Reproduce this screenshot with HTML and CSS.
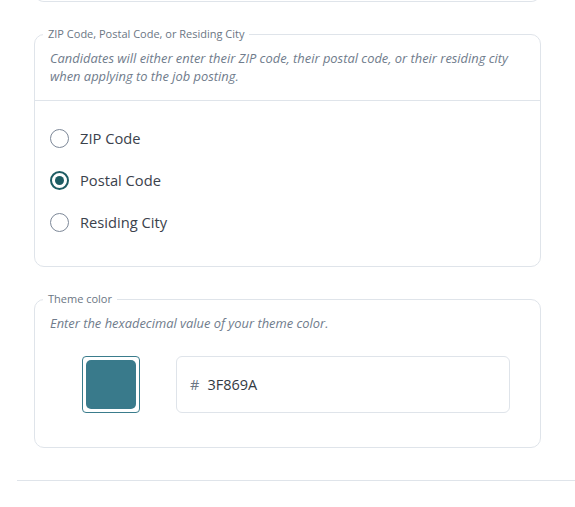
FILE: index.html
```html
<!DOCTYPE html>
<html lang="en">
<head>
  <meta charset="UTF-8" />
  <title>Job posting settings</title>
  <link rel="stylesheet" href="styles.css">
</head>
<body>

  <div class="formulario">
    <div class="bloque-anterior"></div>

    <fieldset class="grupo">
      <legend>ZIP Code, Postal Code, or Residing City</legend>
      <p class="ayuda ayuda-linea">Candidates will either enter their ZIP code, their postal code, or their residing city when applying to the job posting.</p>

      <div class="opciones">
        <label class="opcion">
          <input type="radio" name="ubicacion" value="zip">
          <span>ZIP Code</span>
        </label>
        <label class="opcion">
          <input type="radio" name="ubicacion" value="postal" checked>
          <span>Postal Code</span>
        </label>
        <label class="opcion">
          <input type="radio" name="ubicacion" value="city">
          <span>Residing City</span>
        </label>
      </div>
    </fieldset>

    <fieldset class="grupo grupo-color">
      <legend>Theme color</legend>
      <p class="ayuda">Enter the hexadecimal value of your theme color.</p>

      <div class="fila-color">
        <div class="muestra">
          <div class="muestra-relleno"></div>
        </div>
        <div class="campo-hex">
          <span class="almohadilla">#</span>
          <span class="valor">3F869A</span>
        </div>
      </div>
    </fieldset>
  </div>

  <div class="separador"></div>

</body>
</html>
```

FILE: styles.css
```css
body {
  margin: 0;
  font-family: 'Open Sans', sans-serif;
  background-color: #fff;
  color: #3b424c;
}

.formulario {
  padding: 0 34px;
}

.bloque-anterior {
  height: 10px;
  margin-top: -9px;
  border: 1px solid #dfe4ea;
  border-top: none;
  border-radius: 0 0 10px 10px;
}

.grupo {
  margin: 25px 0 0;
  padding: 0;
  border: 1px solid #dfe4ea;
  border-radius: 10px;
  min-width: 0;
}

.grupo legend {
  margin-left: 8px;
  padding: 0 5px;
  font-size: 11px;
  line-height: 14px;
  color: #6b7684;
}

.ayuda {
  margin: 0;
  padding: 8px 15px 0;
  font-size: 12.9px;
  line-height: 18px;
  font-style: italic;
  color: #707c8c;
}

.ayuda-linea {
  padding-bottom: 15px;
  border-bottom: 1px solid #dfe4ea;
}

.opciones {
  display: flex;
  flex-direction: column;
  gap: 21px;
  padding: 27px 15px 33px;
}

.opcion {
  display: flex;
  align-items: center;
  gap: 11px;
  font-size: 14.7px;
  line-height: 21px;
  color: #3b424c;
  cursor: pointer;
}

.opcion input {
  appearance: none;
  margin: 0;
  width: 19px;
  height: 19px;
  border: 1.5px solid #7d8898;
  border-radius: 50%;
  display: grid;
  place-items: center;
}

.opcion input:checked {
  border: 2px solid #1d5c63;
}

.opcion input:checked::after {
  content: "";
  width: 9px;
  height: 9px;
  border-radius: 50%;
  background-color: #1d5c63;
}

.fila-color {
  display: flex;
  align-items: center;
  gap: 36px;
  padding: 24px 30px 34px 47px;
}

.muestra {
  width: 58px;
  height: 57px;
  box-sizing: border-box;
  border: 1px solid #3a7c8c;
  border-radius: 4px;
  padding: 3px;
}

.muestra-relleno {
  height: 100%;
  border-radius: 5px;
  background-color: #397a8b;
}

.campo-hex {
  flex: 1;
  height: 57px;
  box-sizing: border-box;
  border: 1px solid #dfe4ea;
  border-radius: 6px;
  display: flex;
  align-items: center;
  gap: 8px;
  padding-left: 13px;
  font-size: 14.5px;
}

.almohadilla {
  color: #6b7684;
}

.valor {
  color: #333a42;
}

.separador {
  margin: 32px 0 0 17px;
  border-top: 1px solid #dfe4ea;
}
```
